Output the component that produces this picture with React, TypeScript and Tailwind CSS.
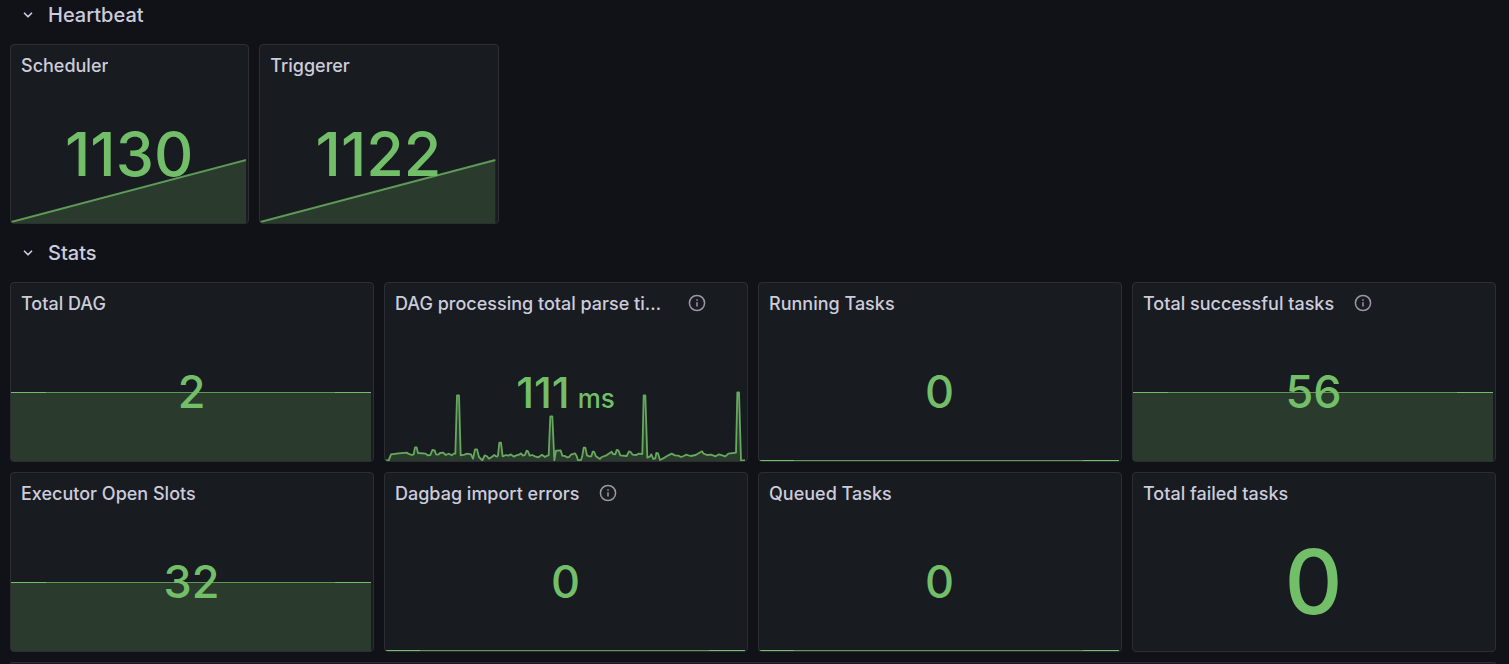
import React from "react";
import { ChevronDown } from "lucide-react";

type Chart = "ramp" | "level" | "zero" | "spikes" | "none";

interface Stat {
  title: string;
  value: string;
  unit?: string;
  info?: boolean;
  chart: Chart;
  size: string;
}

const medium = "pb-[2px] text-[45px]";

const heartbeat: Stat[] = [
  { title: "Scheduler", value: "1130", chart: "ramp", size: "text-[61px]" },
  { title: "Triggerer", value: "1122", chart: "ramp", size: "text-[61px]" },
];

const stats: Stat[] = [
  { title: "Total DAG", value: "2", chart: "level", size: medium },
  {
    title: "DAG processing total parse time",
    value: "111",
    unit: "ms",
    info: true,
    chart: "spikes",
    size: "text-[43px]",
  },
  { title: "Running Tasks", value: "0", chart: "zero", size: medium },
  { title: "Total successful tasks", value: "56", info: true, chart: "level", size: medium },
  { title: "Executor Open Slots", value: "32", chart: "level", size: medium },
  { title: "Dagbag import errors", value: "0", info: true, chart: "zero", size: medium },
  { title: "Queued Tasks", value: "0", chart: "zero", size: medium },
  { title: "Total failed tasks", value: "0", chart: "none", size: "text-[90px]" },
];

const spikes =
  "0,226 11,226 18,208 40,205 66,203 70,206 80,210 86,208 90,187 95,187 99,204 122,206 128,211 136,210 142,195 149,196 153,208 160,209 165,204 175,203 182,210 192,206 200,211 206,206 211,206 216,31 222,31 227,211 238,209 247,206 258,208 264,221 270,193 276,193 282,216 292,226 299,211 305,213 312,221 320,216 328,210 334,215 339,212 343,173 348,173 353,214 363,210 370,212 378,208 386,215 394,211 402,209 408,205 414,212 420,210 425,197 429,199 434,212 442,210 450,214 460,217 471,209 480,216 486,212 491,211 496,94 502,94 508,226 513,197 527,196 532,212 540,213 546,217 552,216 558,209 570,205 575,213 579,226 588,225 592,212 596,188 601,188 606,211 613,214 619,214 623,200 627,200 633,214 645,222 650,216 662,212 680,200 684,207 691,208 695,195 700,196 706,211 725,213 732,199 737,201 743,209 754,210 760,206 772,207 776,31 781,31 787,218 794,215 799,208 805,222 811,220 814,204 819,205 825,225 840,217 850,211 860,206 870,211 880,212 888,216 896,213 903,209 917,213 932,210 942,204 951,199 956,206 966,210 978,209 992,214 1002,208 1012,211 1021,214 1030,206 1053,203 1057,22 1062,22 1068,226 1080,226";

function Sparkline({ chart }: { chart: Chart }) {
  const frame = "absolute bottom-0 left-0 w-[calc(100%-2px)]";
  if (chart === "ramp") {
    return (
      <svg className={`${frame} h-16`} viewBox="0 0 100 64" preserveAspectRatio="none" aria-hidden="true">
        <polygon points="0,63 100,1 100,64 0,64" fill="#73bf69" fillOpacity="0.2" />
        <polyline
          points="0,63 100,1"
          fill="none"
          stroke="#73bf69"
          strokeOpacity="0.75"
          strokeWidth="2"
          vectorEffect="non-scaling-stroke"
        />
      </svg>
    );
  }
  if (chart === "spikes") {
    return (
      <svg className={`${frame} h-[76px]`} viewBox="0 0 1080 228" preserveAspectRatio="none" aria-hidden="true">
        <polygon points={`${spikes} 1080,228 0,228`} fill="#73bf69" fillOpacity="0.2" />
        <polyline
          points={spikes}
          fill="none"
          stroke="#73bf69"
          strokeOpacity="0.85"
          strokeWidth="1.8"
          strokeLinejoin="round"
          vectorEffect="non-scaling-stroke"
        />
      </svg>
    );
  }
  if (chart === "level" || chart === "zero") {
    return (
      <svg className={chart === "level" ? `${frame} h-[69px]` : `${frame} h-px`} aria-hidden="true">
        <rect y="1" width="100%" height="100%" fill="#73bf69" fillOpacity="0.2" />
        <rect y="0" width="100%" height="1" fill="#5a9a52" />
        <rect y="0" width="9.7%" height="1" fill="#73bf69" />
        <rect y="0" x="90%" width="10%" height="1" fill="#73bf69" />
      </svg>
    );
  }
  return null;
}

function InfoIcon() {
  return (
    <svg viewBox="0 0 18 18" className="size-[18px]" fill="none" stroke="currentColor" strokeWidth="1.5" aria-hidden="true">
      <circle cx="9" cy="9" r="7.6" />
      <path d="M9 8.3v4.2M9 5.2v1.5" />
    </svg>
  );
}

function Panel({ stat }: { stat: Stat }) {
  return (
    <article className="relative flex h-[180px] min-w-0 flex-col overflow-hidden rounded-sm border border-[#2c2e33] bg-[#181b1f]">
      <header className="flex h-10 items-center gap-5 pr-[41px] pl-2.5">
        <h3 className="min-w-0 truncate pt-px text-lg font-medium text-[#ccccdc]">{stat.title}</h3>
        {stat.info && (
          <button type="button" aria-label={`About ${stat.title}`} className="shrink-0 text-[#9899a4]">
            <InfoIcon />
          </button>
        )}
      </header>
      <Sparkline chart={stat.chart} />
      <p className="relative flex flex-1 items-center justify-center pr-px font-medium text-[#73bf69]">
        <span className={`${stat.size} leading-none`}>
          {stat.value}
          {stat.unit && <span className="pl-2 text-[26px]">{stat.unit}</span>}
        </span>
      </p>
    </article>
  );
}

function RowTitle({ children }: { children: React.ReactNode }) {
  return (
    <h2 className="mb-3.5 h-[30px] text-xl font-medium text-[#ccccdc]">
      <button type="button" aria-expanded="true" className="flex h-full items-center gap-[13px] pl-[11px]">
        <ChevronDown className="size-3.5" strokeWidth={3} aria-hidden="true" />
        {children}
      </button>
    </h2>
  );
}

export default function App() {
  return (
    <main className="flex min-h-screen flex-col bg-[#111217] pr-[13px] pl-2.5 font-['Inter',sans-serif]">
      <section>
        <RowTitle>Heartbeat</RowTitle>
        <div className="grid grid-cols-6 gap-2.5">
          {heartbeat.map((stat) => (
            <Panel key={stat.title} stat={stat} />
          ))}
        </div>
      </section>
      <section className="mt-3.5">
        <RowTitle>Stats</RowTitle>
        <div className="grid grid-cols-4 gap-2.5">
          {stats.map((stat) => (
            <Panel key={stat.title} stat={stat} />
          ))}
        </div>
      </section>
      <div className="mt-2.5 flex-1 rounded-t-sm border border-b-0 border-[#2c2e33] bg-[#181b1f]" />
    </main>
  );
}
